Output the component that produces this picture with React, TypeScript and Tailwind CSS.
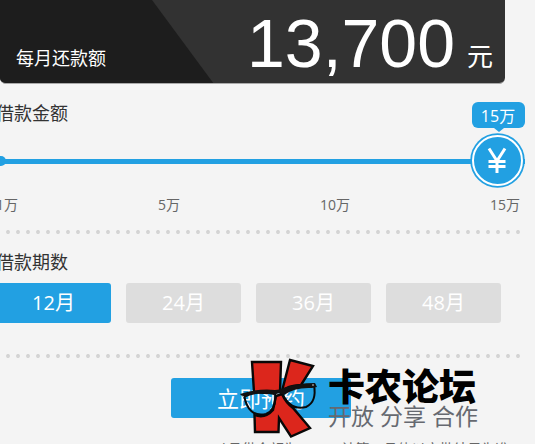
import { useState } from "react";

const sans = "font-['Open_Sans','Noto_Sans_CJK_SC',sans-serif]";
const months = [12, 24, 36, 48];

function Dots() {
  return (
    <div className="mr-3">
      <svg className="block h-1 w-full" aria-hidden="true">
        <defs>
          <pattern id="dots" width="10" height="4" patternUnits="userSpaceOnUse">
            <circle cx="8" cy="2" r="1.9" fill="#cfcfcf" />
            <circle cx="8" cy="2" r="0.6" fill="#e6e6e6" />
          </pattern>
        </defs>
        <rect width="100%" height="4" fill="url(#dots)" />
      </svg>
    </div>
  );
}

function KLogo() {
  return (
    <svg className="h-[84px] w-20 shrink-0" viewBox="0 0 80 84" aria-hidden="true">
      <g fill="#dc261c" stroke="#080808" strokeWidth="2.4">
        <path d="M13 4 L42 4 L41 34 Q32 33 28 35 L15 34 Z" />
        <path d="M51 2 L74 8 L62 27 Q48 28 43 33 Z" />
        <path d="M15.500 57 Q26 61 34 52 L37 38 L43 36 Q47 45 54 50 L71 70 L52 78.500 L40 60 L39.500 74 L16 74 Z" />
      </g>
      <g fill="none" stroke="#080808" strokeWidth="2">
        <path d="M5 37 Q20 32 36 35 Q38 51 27 56 Q9 60 5 37 Z" />
        <path d="M43 35 Q55 27 75 27 Q78 44 67 49 Q51 53 43 35 Z" />
      </g>
      <path d="M1 36 Q20 30 36 32 Q40 32 45 30 Q58 25 76 25 L78 29 L73 30 Q56 29 45 37 L40 35 L35 37 Q18 33 5 40 Z" fill="#111" />
      <path d="M3 38 l2 1 M73 27 l2 0" stroke="#ccc" />
    </svg>
  );
}

export default function App() {
  const [term, setTerm] = useState(12);
  const [amount, setAmount] = useState(15);
  return (
    <div className={"h-screen overflow-hidden bg-[#f4f4f4] text-[#333] " + sans}>
      <header className="relative mr-[30px] flex h-[84px] items-end justify-between overflow-hidden rounded-b-md border-b border-[#aaa] bg-[#323232] pl-4 pr-3 text-white">
        <svg className="absolute left-0 top-0 h-[84px] w-[214px]" aria-hidden="true">
          <path d="M0 0H152L214 84H0Z" fill="#1d1d1d" />
        </svg>
        <span className="relative pb-[11px] text-lg leading-7">每月还款额</span>
        <span className="relative flex items-end gap-3">
          <span className="font-['Liberation_Sans',Arial,sans-serif] text-[68px] leading-[80px]">13,700</span>
          <span className="pb-[11px] text-[26px] leading-8">元</span>
        </span>
      </header>

      <section className="relative h-[146px]">
        <label htmlFor="amount" className="-ml-1 block pt-[17px] text-lg leading-6">借款金额</label>
        <div className="mr-[10px] mt-[26px] flex h-5 items-center">
          <span className="-ml-1 size-[10px] shrink-0 rounded-full bg-[#22a0e2]" />
          <span className="-ml-1 h-[5px] grow bg-[#22a0e2]" />
        </div>
        <input id="amount" type="range" min="1" max="15" value={amount} onChange={(e) => setAmount(+e.target.value)} className="absolute left-0 top-[68px] h-5 w-full opacity-0" />
        <div className="pointer-events-none absolute right-[9px] top-[18px] flex w-[56px] flex-col items-center">
          <output htmlFor="amount" className="flex h-[26px] w-[53px] items-center justify-center rounded-md bg-[#22a0e2] pt-px text-base leading-6 text-white">{amount}万</output>
          <svg className="h-[60px] w-14" viewBox="0 0 56 60" aria-hidden="true">
            <path d="M24 0H34L29 4Z" fill="#22a0e2" />
            <circle cx="27.500" cy="32.500" r="27.300" fill="#22a0e2" />
            <circle cx="27.500" cy="32.500" r="24.500" fill="none" stroke="#fff" strokeWidth="2" />
            <path d="M19 20.500L27 33L35 20.500M18.500 33.500H35.500M18.500 38.500H35.500M27 32V45" fill="none" stroke="#fff" strokeWidth="3" />
          </svg>
        </div>
        <div className="-ml-1 mr-[15px] mt-6 flex justify-between text-sm leading-5 text-[#666]">
          <span>1万</span><span>5万</span><span>10万</span><span>15万</span>
        </div>
      </section>
      <Dots />

      <section className="h-[120px]">
        <h2 className="-ml-1 pt-4 text-lg leading-6">借款期数</h2>
        <div className="-ml-1 mr-[34px] mt-[9px] grid grid-cols-4 gap-[15px]">
          {months.map((m) => (
            <button key={m} type="button" onClick={() => setTerm(m)} className={"h-10 rounded-[3px] text-xl text-white " + (m === term ? "bg-[#22a0e2]" : "bg-[#ddd]")}>
              {m}月
            </button>
          ))}
        </div>
      </section>
      <Dots />

      <div className="relative pt-5">
        <button type="button" className="ml-[171px] block h-10 w-[180px] rounded-[3px] bg-[#22a0e2] text-[22px] leading-10 text-white">立即预约</button>
        <div className="absolute left-[239px] top-0 flex gap-[9px]">
          <KLogo />
          <div className="pt-2">
            <div className="whitespace-nowrap font-['Noto_Sans_CJK_SC',sans-serif] text-[37px] font-black leading-[38px] text-black">卡农论坛</div>
            <div className="whitespace-nowrap text-[23px] leading-6 text-[#666970]">开放 分享 合作</div>
          </div>
        </div>
        <p className="ml-[220px] mt-[21px] whitespace-nowrap text-sm leading-5 text-[#666]">*月供金额为100.00计算，具体以审批结果为准</p>
      </div>
    </div>
  );
}
